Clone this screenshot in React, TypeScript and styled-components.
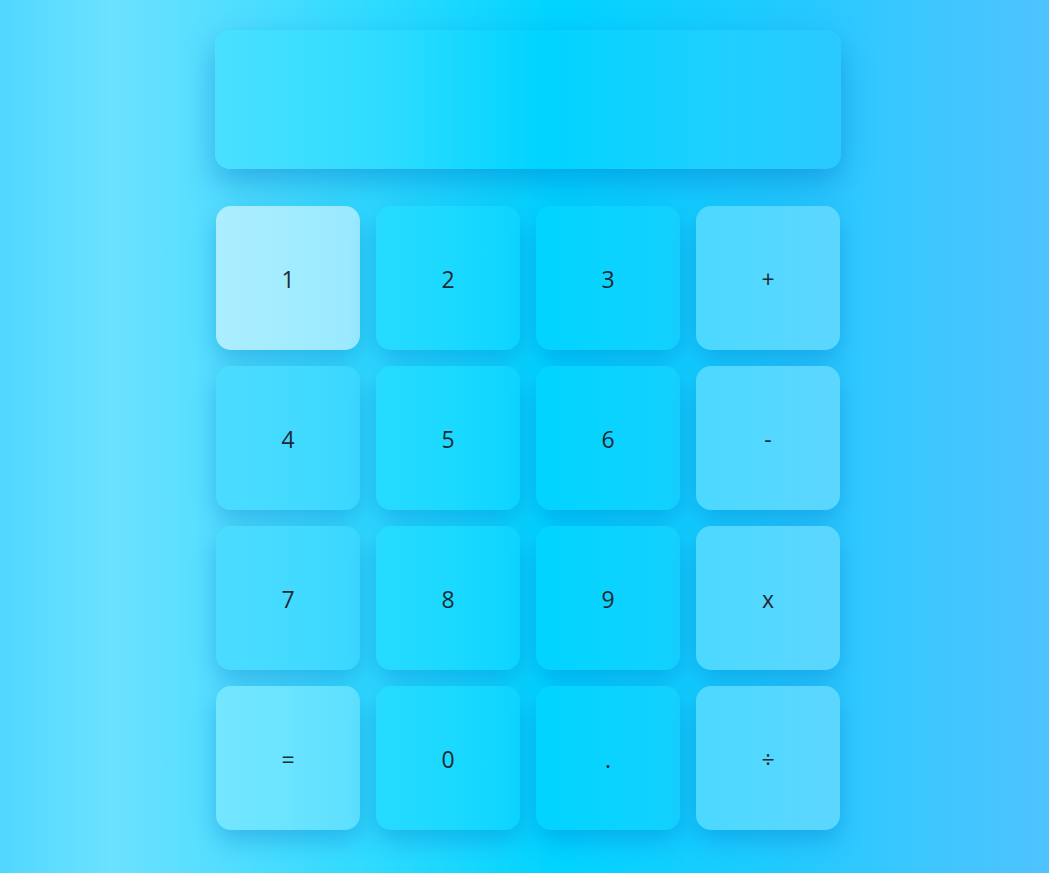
import React from "react";
import styled, { createGlobalStyle } from "styled-components";

const Global = createGlobalStyle`
  html, body {
    margin: 0;
    padding: 0;
    height: 100%;
  }
  body {
    min-height: 873px;
    background: linear-gradient(to right, #50d7ff 0%, #6be2ff 10.5%, #5ddfff 17%, #2bdaff 37%, #00d4ff 53%, #22caff 75%, #40c6ff 90%, #4fc3ff 100%);
    font-family: "Open Sans", "Noto Sans", sans-serif;
    overflow: hidden;
  }
`;

const Calculator = styled.div`
  width: 626px;
  margin: 30px 0 0 215px;
  display: flex;
  flex-direction: column;
  gap: 37px;
`;

const Display = styled.div`
  height: 139px;
  border-radius: 15px;
  background: linear-gradient(to right, #4ae0ff 0%, #2edcff 27%, #00d4ff 52%, #1ed0ff 80%, #2ac9ff 100%);
  box-shadow: 0 14px 32px rgba(0, 100, 190, 0.4);
  display: flex;
  align-items: center;
  justify-content: flex-end;
  padding: 0 24px;
  box-sizing: border-box;
  font-size: 40px;
  color: #1a2630;
`;

const Keypad = styled.div`
  display: grid;
  grid-template-columns: repeat(4, 144px);
  grid-auto-rows: 144px;
  gap: 16px;
  padding-left: 1px;
`;

type Tone = "active" | "c1" | "c2" | "c3" | "op" | "eq";

const tones: Record<Tone, string> = {
  active: "linear-gradient(to right, #abeeff 0%, #a3ecff 50%, #98e9ff 100%)",
  c1: "linear-gradient(to right, #4adcff 0%, #44daff 50%, #3ad7ff 100%)",
  c2: "linear-gradient(to right, #26dbff 0%, #1cd9ff 50%, #0cd5ff 100%)",
  c3: "linear-gradient(to right, #00d4ff 0%, #0ad3ff 50%, #14d0ff 100%)",
  op: "linear-gradient(to right, #4cd8ff 0%, #54d8ff 50%, #5cd6ff 100%)",
  eq: "linear-gradient(to right, #74e6ff 0%, #6ae4ff 50%, #5cdfff 100%)",
};

const Key = styled.button<{ $tone: Tone }>`
  border: none;
  border-radius: 15px;
  background: ${(p) => tones[p.$tone]};
  box-shadow: 0 10px 24px rgba(0, 100, 190, 0.33);
  font-family: "Open Sans", "Noto Sans", sans-serif;
  font-size: 23px;
  color: #1c2a33;
  display: flex;
  align-items: center;
  justify-content: center;
  padding: 2px 0 0;
  cursor: pointer;
`;

const keys: { label: string; tone: Tone }[] = [
  { label: "1", tone: "active" },
  { label: "2", tone: "c2" },
  { label: "3", tone: "c3" },
  { label: "+", tone: "op" },
  { label: "4", tone: "c1" },
  { label: "5", tone: "c2" },
  { label: "6", tone: "c3" },
  { label: "-", tone: "op" },
  { label: "7", tone: "c1" },
  { label: "8", tone: "c2" },
  { label: "9", tone: "c3" },
  { label: "x", tone: "op" },
  { label: "=", tone: "eq" },
  { label: "0", tone: "c2" },
  { label: ".", tone: "c3" },
  { label: "÷", tone: "op" },
];

export default function App() {
  return (
    <>
      <Global />
      <Calculator>
        <Display />
        <Keypad>
          {keys.map((k) => (
            <Key key={k.label} $tone={k.tone}>
              {k.label}
            </Key>
          ))}
        </Keypad>
      </Calculator>
    </>
  );
}
